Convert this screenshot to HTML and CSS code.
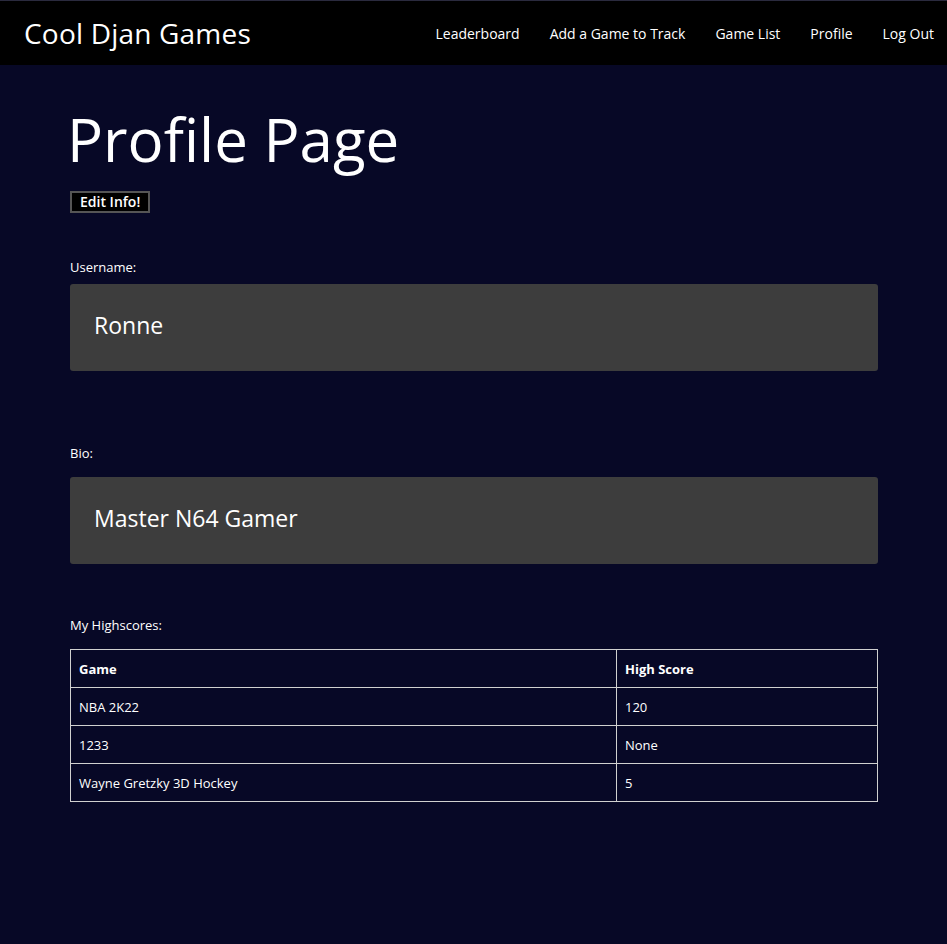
FILE: index.html
```html
<!DOCTYPE html>
<html lang="en">
<head>
<meta charset="utf-8">
<title>Profile Page</title>
<link rel="stylesheet" href="styles.css">
</head>
<body>
<nav class="navbar">
  <a class="brand" href="#">Cool Djan Games</a>
  <ul class="nav-links">
    <li><a href="#">Leaderboard</a></li>
    <li><a href="#">Add a Game to Track</a></li>
    <li><a href="#">Game List</a></li>
    <li><a href="#">Profile</a></li>
    <li><a href="#">Log Out</a></li>
  </ul>
</nav>
<main class="container">
  <h1 class="page-title">Profile Page</h1>
  <button class="edit-btn" type="button">Edit Info!</button>

  <section class="field field-username">
    <div class="field-label">Username:</div>
    <div class="field-box">Ronne</div>
  </section>

  <section class="field field-bio">
    <div class="field-label bio-label">Bio:</div>
    <div class="field-box">Master N64 Gamer</div>
  </section>

  <section class="scores">
    <div class="field-label scores-label">My Highscores:</div>
    <table class="score-table">
      <thead>
        <tr><th class="col-game">Game</th><th>High Score</th></tr>
      </thead>
      <tbody>
        <tr><td>NBA 2K22</td><td>120</td></tr>
        <tr><td>1233</td><td>None</td></tr>
        <tr><td>Wayne Gretzky 3D Hockey</td><td>5</td></tr>
      </tbody>
    </table>
  </section>
</main>
</body>
</html>
```
FILE: styles.css
```css
* { box-sizing: border-box; }
html, body {
  margin: 0;
  padding: 0;
}
body {
  background: #070826;
  color: #fff;
  font-family: "Comic Sans MS", "Open Sans", "DejaVu Sans", sans-serif;
  min-height: 944px;
}
a { color: #fff; text-decoration: none; }

.navbar {
  display: flex;
  align-items: center;
  justify-content: space-between;
  height: 65px;
  background: #000;
  border-top: 1px solid #2a2a3e;
  padding: 0 13px 0 24px;
}
.brand {
  font-size: 28px;
  letter-spacing: 0.2px;
}
.nav-links {
  list-style: none;
  display: flex;
  gap: 30px;
  margin: 0;
  padding: 0;
  font-size: 14px;
}

.container {
  padding: 34px 69px 0 70px;
}
.page-title {
  font-size: 60px;
  font-weight: 400;
  line-height: 80px;
  margin: 0 0 12px -3px;
}
.edit-btn {
  display: block;
  background: #000;
  color: #fff;
  border: 2px solid #555;
  font-family: inherit;
  font-size: 14px;
  font-weight: 600;
  padding: 0 8px;
  height: 22px;
  line-height: 18px;
}

.field-label {
  font-size: 13px;
  line-height: 18px;
  margin-bottom: 8px;
}
.field-username { margin-top: 45px; }
.field-bio { margin-top: 73px; }
.bio-label { margin-bottom: 15px; }
.field-box {
  background: #3d3d3d;
  border-radius: 3px;
  height: 87px;
  display: flex;
  align-items: center;
  padding: 0 24px 5px;
  font-size: 23px;
}

.scores { margin-top: 52px; }
.scores-label { margin-bottom: 15px; }
.score-table {
  width: 100%;
  border-collapse: collapse;
  font-size: 13px;
}
.score-table th,
.score-table td {
  border: 1px solid #d0d0d0;
  height: 38px;
  padding: 0 8px;
  text-align: left;
}
.col-game { width: 546px; }
```
